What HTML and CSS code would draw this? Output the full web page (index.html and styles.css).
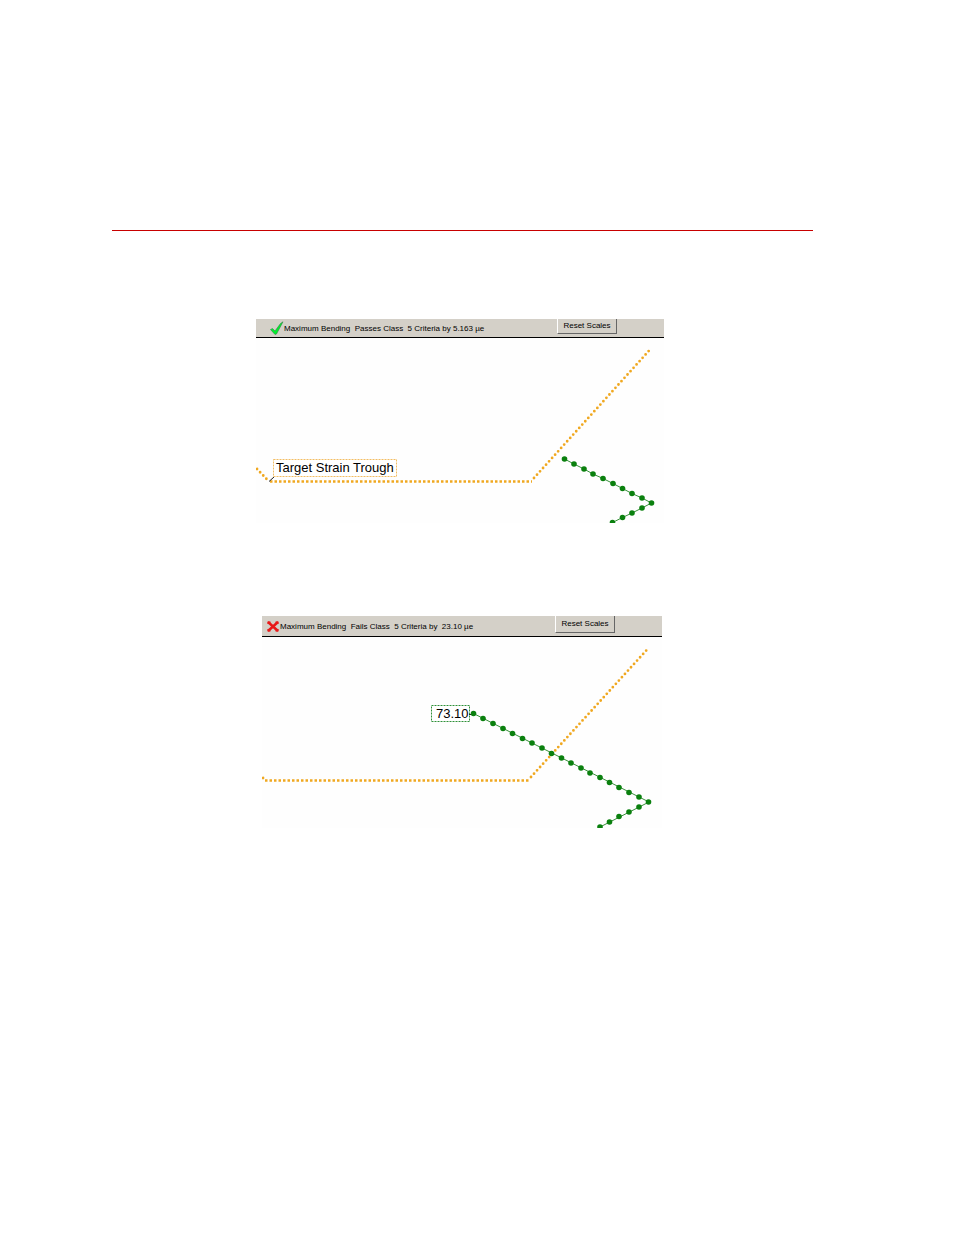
FILE: index.html
```html
<!DOCTYPE html>
<html lang="en">
<head>
<meta charset="utf-8">
<title>Maximum Bending Criteria</title>
<link rel="stylesheet" href="styles.css">
</head>
<body>
<main class="page">
  <hr class="rule">
  <section class="panel panel-pass">
    <header class="bar">
      <svg class="icon" viewBox="0 0 14 14" aria-hidden="true"><path d="M.5 8.500 L2.500 7.500 L5 10 L10.500 2.500 L13 .8 L6.500 13 L5 13.500 Z" fill="#00ef2c" stroke="#35804a" stroke-width=".6"/></svg>
      <p class="status">Maximum Bending&nbsp; Passes Class&nbsp; 5 Criteria by 5.163 µe</p>
      <button class="reset" type="button">Reset Scales</button>
    </header>
    <svg class="chart" viewBox="0 0 408 185" role="img" aria-label="Target strain trough, passing">
      <path class="target" d="M1 131 L13 143.500"/>
      <path class="target-flat" d="M14 143.500 H276"/>
      <path class="target" d="M278 140 L395 10.500"/>
      <path class="leader" d="M13 143.500 L18 139"/>
      <rect class="tag tag-target" x="17.500" y="121.500" width="123" height="17"/>
      <text class="tag-text" x="20" y="134">Target Strain Trough</text>
      <polyline class="series" points="308.500,121 318,126 328,131 337,136 347,140.500 357,145.500 366.500,150.500 376,155.500 386,160 395.500,165 386,170 376,175 366.500,179.500 356.500,184.500"/>
      <g class="dots"><circle cx="308.500" cy="121" r="2.800"/><circle cx="318" cy="126" r="2.800"/><circle cx="328" cy="131" r="2.800"/><circle cx="337" cy="136" r="2.800"/><circle cx="347" cy="140.500" r="2.800"/><circle cx="357" cy="145.500" r="2.800"/><circle cx="366.500" cy="150.500" r="2.800"/><circle cx="376" cy="155.500" r="2.800"/><circle cx="386" cy="160" r="2.800"/><circle cx="395.500" cy="165" r="2.800"/><circle cx="386" cy="170" r="2.800"/><circle cx="376" cy="175" r="2.800"/><circle cx="366.500" cy="179.500" r="2.800"/><circle cx="356.500" cy="184.500" r="2.800"/></g>
    </svg>
  </section>
  <section class="panel panel-fail">
    <header class="bar">
      <svg class="icon" viewBox="0 0 14 14" aria-hidden="true"><path d="M2 3 L12 12 M12 3 L2 12" stroke="#e81818" stroke-width="2.500"/><path d="M1.500 2.500h3v2.500h-3z M9.500 2.500h3v2.500h-3z M1.500 10h3v2.500h-3z M9.500 10h3v2.500h-3z" fill="#e81818"/></svg>
      <p class="status">Maximum Bending&nbsp; Fails Class&nbsp; 5 Criteria by&nbsp; 23.10 µe</p>
      <button class="reset" type="button">Reset Scales</button>
    </header>
    <svg class="chart" viewBox="0 0 400 191" role="img" aria-label="Bending strain 73.10, failing">
      <path class="target" d="M1 141 L2 142"/>
      <path class="target-flat" d="M3 143.500 H267"/>
      <path class="target" d="M269 140 L387 10.500"/>
      <rect class="tag tag-series" x="169.500" y="68.500" width="38" height="16"/>
      <text class="tag-text" x="174" y="81">73.10</text>
      <path class="leader" d="M207 77.500 H211"/>
      <polyline class="series" points="211.500,76.500 387,165 338,190"/>
      <g class="dots"><circle cx="211.500" cy="76.500" r="2.800"/><circle cx="221" cy="81.500" r="2.800"/><circle cx="231" cy="86.500" r="2.800"/><circle cx="241" cy="91.500" r="2.800"/><circle cx="250.500" cy="96.500" r="2.800"/><circle cx="260.500" cy="101.500" r="2.800"/><circle cx="270" cy="106" r="2.800"/><circle cx="280" cy="111" r="2.800"/><circle cx="289.500" cy="116.500" r="2.800"/><circle cx="299.500" cy="121" r="2.800"/><circle cx="309" cy="126" r="2.800"/><circle cx="319" cy="131" r="2.800"/><circle cx="328" cy="136" r="2.800"/><circle cx="338" cy="140.500" r="2.800"/><circle cx="347.500" cy="145.500" r="2.800"/><circle cx="357" cy="150.500" r="2.800"/><circle cx="367" cy="155.500" r="2.800"/><circle cx="377" cy="160" r="2.800"/><circle cx="386.500" cy="165" r="2.800"/><circle cx="377" cy="170" r="2.800"/><circle cx="367" cy="175" r="2.800"/><circle cx="357" cy="179.500" r="2.800"/><circle cx="347.500" cy="185" r="2.800"/><circle cx="338" cy="190" r="2.800"/></g>
    </svg>
  </section>
</main>
</body>
</html>
```
FILE: styles.css
```css
* { box-sizing: border-box; }
body {
  margin: 0;
  background: #fff;
  color: #000;
  font-family: "Liberation Sans", Arial, sans-serif;
}
.page { padding: 230px 141px 80px 112px; }
.rule { margin: 0; border: 0; border-top: 1px solid #c80000; }
.panel { margin-left: 144px; background: #fefefe; }
.panel-pass { max-width: 408px; margin-top: 88px; }
.panel-fail { max-width: 400px; margin-top: 93px; margin-left: 150px; }
.bar {
  display: flex;
  align-items: flex-start;
  height: 19px;
  padding-left: 14px;
  background: #d4d0c8;
  border-bottom: 1px solid #000;
}
.panel-fail .bar { height: 21px; padding-left: 4px; }
.icon { width: 14px; height: 14px; flex: none; margin-top: 2px; }
.panel-fail .icon { margin-top: 3px; }
.status {
  flex: 1;
  margin: 0;
  font-size: 8px;
  line-height: 19px;
  white-space: nowrap;
}
.panel-fail .status { line-height: 22px; }
.reset {
  width: 60px;
  height: 15px;
  margin: 0 47px 0 0;
  padding: 0 0 1px;
  background: #d4d0c8;
  border: 1px solid #666;
  border-top: 0;
  border-left-color: #fff;
  color: #000;
  font-family: inherit;
  font-size: 8px;
  line-height: 13px;
  white-space: nowrap;
}
.panel-fail .reset { height: 17px; }
.chart { display: block; width: 100%; height: auto; }
.target { fill: none; stroke: #f0a820; stroke-width: 2.8; stroke-linecap: round; stroke-dasharray: 0 4.5; }
.target-flat { fill: none; stroke: #f0a820; stroke-width: 2.5; stroke-dasharray: 2.5 2; }
.series { fill: none; stroke: #38903a; stroke-width: 1; }
.dots { fill: #0a800e; }
.leader { fill: none; stroke: #222; stroke-width: 1; }
.tag { fill: #fff; stroke-width: 1; stroke-dasharray: 2 1; }
.tag-target { stroke: #f2bd62; }
.tag-series { stroke: #2e9038; }
.tag-text { font-size: 13px; }
```
